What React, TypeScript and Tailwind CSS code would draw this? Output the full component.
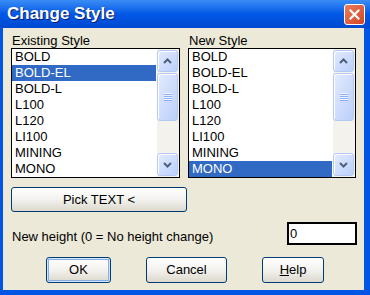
import React from 'react';

const styles = ['BOLD', 'BOLD-EL', 'BOLD-L', 'L100', 'L120', 'LI100', 'MINING', 'MONO'];

function Chevron({ up }: { up?: boolean }) {
  return (
    <svg width="9" height="6" viewBox="0 0 9 6">
      <path
        d={up ? 'M1 5 L4.5 1.5 L8 5' : 'M1 1 L4.5 4.5 L8 1'}
        fill="none"
        stroke="#4D6185"
        strokeWidth="2"
      />
    </svg>
  );
}

function ScrollButton({ children, className }: { children?: React.ReactNode; className?: string }) {
  return (
    <div
      className={`flex items-center justify-center rounded-[3px] border border-[#B6C9F4] bg-gradient-to-br from-[#E3EBFE] to-[#BCCFFA] shadow-[inset_1px_1px_0_#ffffff] ${className ?? ''}`}
    >
      {children}
    </div>
  );
}

function Scrollbar() {
  return (
    <div className="flex w-[22px] flex-col bg-[#F3F2EC] py-[1px] pr-[1px]">
      <ScrollButton className="h-[22px]">
        <Chevron up />
      </ScrollButton>
      <ScrollButton className="mt-[1px] h-[48px]">
        <svg width="8" height="8" viewBox="0 0 8 8">
          <path d="M0 0.5h8M0 2.5h8M0 4.5h8M0 6.5h8" stroke="#EEF3FF" strokeWidth="1" />
          <path d="M0 1.5h8M0 3.5h8M0 5.5h8M0 7.5h8" stroke="#8CB0F8" strokeWidth="1" />
        </svg>
      </ScrollButton>
      <div className="flex-1" />
      <ScrollButton className="h-[23px]">
        <Chevron />
      </ScrollButton>
    </div>
  );
}

function StyleList({ label, selected, width }: { label: string; selected: string; width: string }) {
  return (
    <div className={`flex flex-col ${width}`}>
      <div className="pl-[1px] text-[13px] leading-[15px]">{label}</div>
      <div className="flex h-[130px] border border-black bg-white">
        <div className="flex flex-1 flex-col pr-[1px]">
          {styles.map((s) => (
            <div
              key={s}
              className={`h-[16px] pl-[3px] text-[13px] leading-[16px] ${s === selected ? 'bg-[#316AC5] text-white' : 'text-black'}`}
            >
              {s}
            </div>
          ))}
        </div>
        <Scrollbar />
      </div>
    </div>
  );
}

function XpButton({ children, width, isDefault }: { children: React.ReactNode; width: string; isDefault?: boolean }) {
  return (
    <button
      className={`flex h-[26px] items-center justify-center rounded-[3px] border border-[#003C74] bg-gradient-to-b from-[#FFFFFF] via-[#F3F2EE] to-[#DCD8CD] text-[13px] text-black ${width} ${isDefault ? 'shadow-[inset_0_0_0_1px_#CEE7FF,inset_0_0_0_2px_#89ADE4]' : ''}`}
    >
      {children}
    </button>
  );
}

export default function App() {
  return (
    <div
      className="flex h-[295px] w-[370px] flex-col bg-[#0055E5]"
      style={{ fontFamily: '"Liberation Sans", Arial, sans-serif' }}
    >
      <div className="flex h-[28px] items-center justify-between bg-gradient-to-b from-[#3A8CF5] via-[#0058E6] to-[#0049D0] pl-[7px] pr-[5px]">
        <span className="text-[17px] font-bold text-white [text-shadow:1px_1px_0_#0A1E6A]">
          Change Style
        </span>
        <div className="flex h-[21px] w-[21px] items-center justify-center rounded-[3px] border border-white bg-gradient-to-br from-[#E97D5E] to-[#D4431E]">
          <svg width="11" height="11" viewBox="0 0 11 11">
            <path d="M1.5 1.5 L9.5 9.5 M9.5 1.5 L1.5 9.5" stroke="#ffffff" strokeWidth="2.2" strokeLinecap="square" />
          </svg>
        </div>
      </div>

      <div className="mb-[5px] ml-[3px] mr-[6px] flex flex-1 flex-col bg-[#ECE9D8] px-[8px] pt-[5px] text-black">
        <div className="flex gap-[8px]">
          <StyleList label="Existing Style" selected="BOLD-EL" width="w-[170px]" />
          <StyleList label="New Style" selected="MONO" width="w-[169px]" />
        </div>

        <div className="mt-[9px] flex">
          <button className="flex h-[25px] w-[176px] items-center justify-center rounded-[3px] border border-[#003C74] bg-gradient-to-b from-[#FFFFFF] via-[#F3F2EE] to-[#DCD8CD] text-[13px]">
            Pick TEXT &lt;
          </button>
        </div>

        <div className="mt-[10px] flex items-center justify-between">
          <span className="pl-[1px] pt-[5px] text-[13px] leading-[15px]">New height (0 = No height change)</span>
          <div className="mr-[-1px] flex h-[23px] w-[70px] items-center border-2 border-black bg-white pl-[1px] text-[13px]">
            0
          </div>
        </div>

        <div className="mt-[12px] flex gap-[35px] pl-[35px]">
          <XpButton width="w-[65px]" isDefault>
            OK
          </XpButton>
          <XpButton width="w-[81px]">Cancel</XpButton>
          <XpButton width="w-[62px]">
            <span>
              <span className="underline">H</span>elp
            </span>
          </XpButton>
        </div>
      </div>
    </div>
  );
}
